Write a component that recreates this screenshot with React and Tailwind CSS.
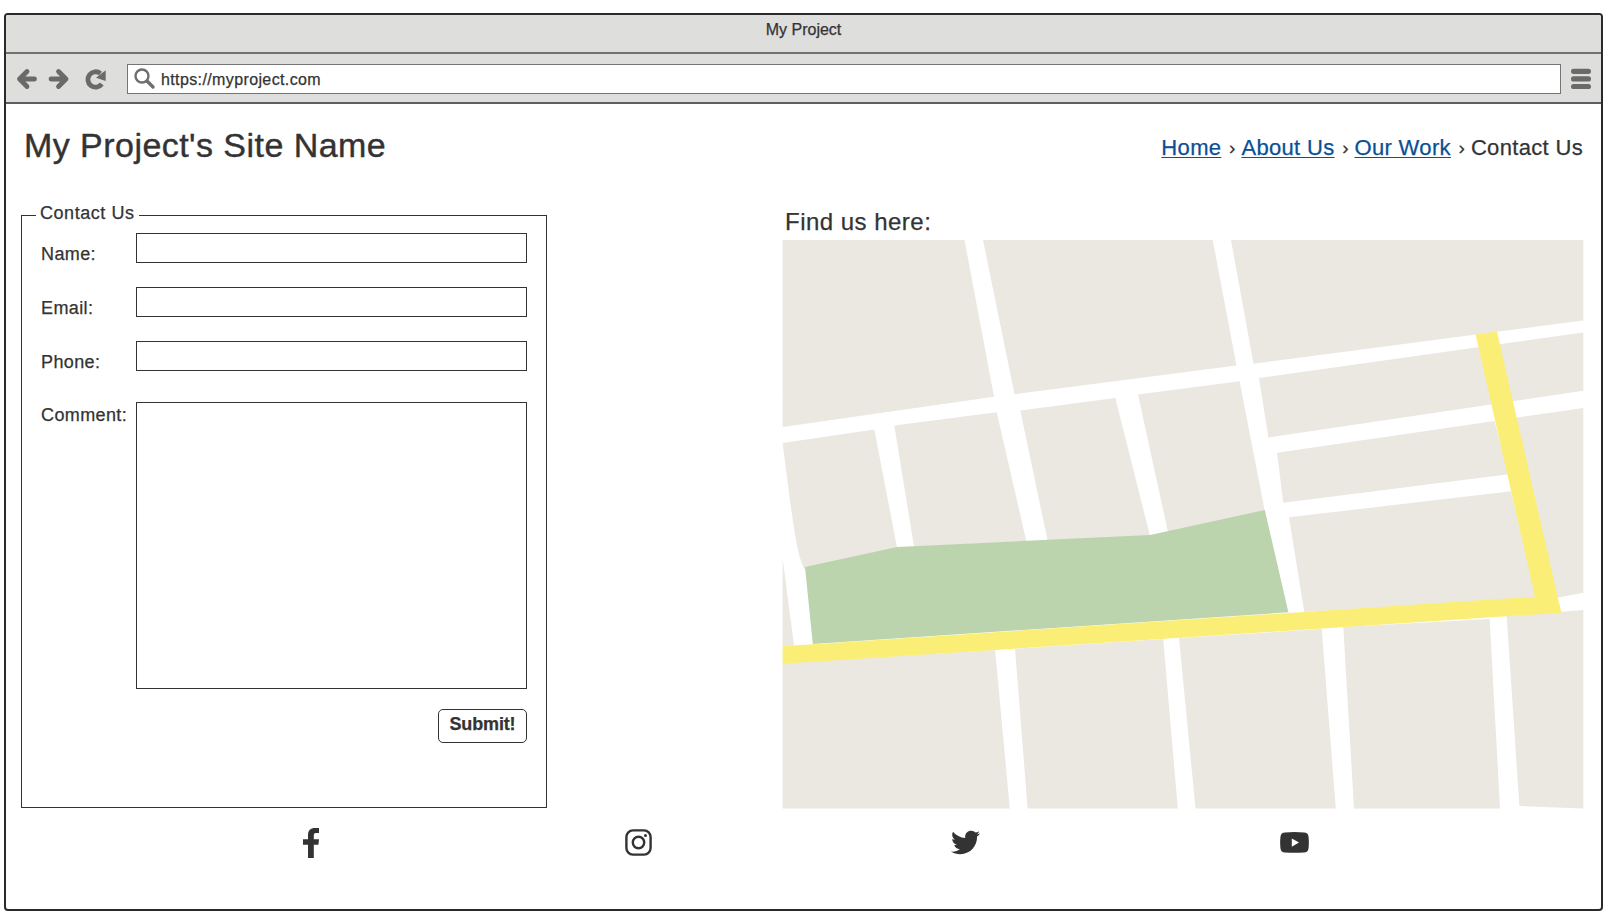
import { FaTwitter, FaYoutube } from "react-icons/fa";

const blocks = [
  "782.6,240 964.5,240 994,396.7 782.6,427",
  "983,240 1212.7,240 1236.5,365.5 1014.5,394.3",
  "1231,240 1583.3,240 1583.3,320.5 1253.5,363.7",
  "894.3,425.5 996.7,412.3 1026.3,541 914,546.5",
  "1020.3,410.5 1115.3,398 1150,536 1047.7,541",
  "1138,394.5 1239.6,381.3 1264.7,510.5 1168,532",
  "1259,378 1583.3,332.5 1583.3,390.7 1268.4,437.5",
  "1277,452.7 1494.5,421 1508.5,474.3 1283.3,502.8",
  "1512,418.2 1583.3,408 1583.3,592.7 1552,598.7",
  "1289,517.3 1511,491.3 1536,597.5 1304.3,612",
  "782.6,558.3 794,645.5 782.6,646.5",
  "782.6,663 995.1,650 1009.8,808.4 782.6,808.4",
  "1015,648.8 1163.2,639 1177.8,808.4 1027.6,808.4",
  "1179,638 1321.7,629 1335.8,808.4 1195.5,808.4",
  "1343.3,627 1489.7,619 1500,808.4 1354,808.4",
  "1506.7,616 1583.3,610 1583.3,808.4 1519.4,806",
];

function StreetMap() {
  return (
    <svg className="block h-[569px] w-[802px]" viewBox="782 240 802 569">
      <g fill="#ebe8e1">
        {blocks.map((p) => (
          <polygon key={p} points={p} />
        ))}
        <path d="M782.6 443 L874.3 429.4 L897 547.5 L804.5 569 C797 556 793 522 787.3 480 Z" />
      </g>
      <polygon fill="#bcd4ad" points="805,567 897,547 1150,535 1264.8,510 1288.4,612.3 812.8,644" />
      <polygon fill="#faee77" points="782.6,646.2 1535,596.7 1475.6,334.4 1497,331.6 1561.4,612.8 782.6,663.8" />
    </svg>
  );
}

function Field({ label, className, labelClass = "mt-[10px]", children }) {
  return (
    <label className={"flex items-start " + className}>
      <span className={"h-[20px] w-[95px] shrink-0 leading-[22px] tracking-[0.38px] " + labelClass}>{label}</span>
      {children}
    </label>
  );
}

const input = "block w-[391px] shrink-0 rounded-none border border-[#333] bg-white";
const link = "shrink-0 whitespace-nowrap text-[#0b4f94] underline underline-offset-[2px] decoration-1";
const sep = "w-[20px] shrink-0 pl-[2px] text-center text-[19px]";

export default function App() {
  return (
    <div className="h-[915px] w-[1606px] overflow-hidden bg-white pt-[13px] pl-[4px] font-['Liberation_Sans',Arial,sans-serif] text-[#333] [-webkit-text-stroke:0.25px]">
      <div className="flex h-[898px] w-[1599px] flex-col overflow-hidden rounded-[4px] border-2 border-[#2b292b] bg-white">
        <div className="h-[39px] shrink-0 border-b-2 border-[#717170] bg-[#dededc] text-center text-[16px] leading-[29px]">My Project</div>
        <div className="flex h-[50px] shrink-0 items-center border-b-2 border-[#5f5d5f] bg-[#dededc] pt-[2px]">
          <svg className="ml-[10px] h-[30px] w-[100px]" viewBox="0 0 100 30" fill="none" stroke="#6a6a6a" strokeWidth="4.8" strokeLinecap="round" strokeLinejoin="round">
            <path d="M11 7.500 3.500 15l7.500 7.500M4 15h14.500" />
            <path d="M42.500 7.500 50 15l-7.500 7.500M49.500 15H35" />
            <path d="M85.800 20A7.700 7.700 0 1 1 84.500 9.500" strokeLinecap="butt" />
            <path d="M89.700 6.200V17L80 13.700Z" fill="#6a6a6a" stroke="none" />
          </svg>
          <div className="ml-[11px] flex h-[30px] w-[1434px] items-center border border-[#757575] bg-white">
            <svg className="ml-[6px] h-[22px] w-[22px]" viewBox="0 0 22 22" fill="none" stroke="#6f6f6f">
              <circle cx="8" cy="8" r="6.500" strokeWidth="2.400" />
              <path d="m13 13 6 6" strokeWidth="3.400" strokeLinecap="round" />
            </svg>
            <span className="ml-[5px] pt-px text-[16px] tracking-[0.38px]">https://myproject.com</span>
          </div>
          <svg className="ml-[10px] h-[22px] w-[20px]" viewBox="0 0 20 22" fill="#6a6a6a">
            <rect y="0.700" width="20" height="5.200" rx="2.600" />
            <rect y="8.300" width="20" height="5.200" rx="2.600" />
            <rect y="15.900" width="20" height="5.200" rx="2.600" />
          </svg>
        </div>

        <header className="flex h-[103px] shrink-0 justify-between pr-[18px] pl-[18px]">
          <h1 className="mt-[19px] text-[34px] leading-[44px] tracking-[0.45px] [-webkit-text-stroke:0.4px]">My Project's Site Name</h1>
          <nav className="mt-[29px] flex h-[30px] text-[22px] leading-[30px] tracking-[0.33px]">
            <a className={link}>Home</a>
            <span className={sep}>›</span>
            <a className={link}>About Us</a>
            <span className={sep}>›</span>
            <a className={link}>Our Work</a>
            <span className={sep}>›</span>
            <span>Contact Us</span>
          </nav>
        </header>

        <main className="flex h-[601px] shrink-0 justify-between pr-[17px] pl-[15px]">
          <fieldset className="h-[601px] w-[526px] border border-[#333] pl-[19px] text-[18px]">
            <legend className="-ml-[5px] h-[16px] px-[4px] leading-[13px] tracking-[0.55px]">Contact Us</legend>
            <Field label="Name:" className="mt-[10px]">
              <input className={input + " h-[30px]"} />
            </Field>
            <Field label="Email:" className="mt-[24px]">
              <input className={input + " h-[30px]"} />
            </Field>
            <Field label="Phone:" className="mt-[24px]">
              <input className={input + " h-[30px]"} />
            </Field>
            <Field label="Comment:" className="mt-[31px]" labelClass="mt-[2px]">
              <textarea className={input + " h-[287px] resize-none"} />
            </Field>
            <div className="flex pt-[20px] pl-[397px]">
              <button className="h-[34px] w-[89px] rounded-[5px] border border-[#333] bg-white pb-[3px] text-[18px] font-bold tracking-[-0.15px]">Submit!</button>
            </div>
          </fieldset>
          <section className="w-[802px]">
            <h2 className="h-[33px] pl-[3px] text-[24px] leading-[30px] tracking-[0.48px]">Find us here:</h2>
            <StreetMap />
          </section>
        </main>

        <footer className="flex h-[69px] shrink-0 items-center pl-[297px]">
          <svg className="h-[30px] w-[16px]" viewBox="0 0 16 30" fill="#333">
            <path d="M5 30V16.800H0V11.200H5V7C5 2.300 7.600 0 12 0H16V5H13C11.300 5 10.800 6 10.800 7.500V11.200H16L15.400 16.800H10.800V30Z" />
          </svg>
          <svg className="ml-[306px] h-[27px] w-[27px]" viewBox="0 0 27 27" fill="none" stroke="#333" strokeWidth="2.400">
            <rect x="1.400" y="1.400" width="24.200" height="24.200" rx="6.500" />
            <circle cx="13.500" cy="13.500" r="5.700" />
            <circle cx="20.500" cy="6.500" r="1.500" fill="#333" stroke="none" />
          </svg>
          <FaTwitter className="ml-[299px] h-[29px] w-[29px]" />
          <svg className="ml-[300px] h-[21px] w-[29px]" viewBox="0 0 29 21" fill="#333">
            <path fillRule="evenodd" d="M5 .5Q14.500-.3 24 .5 28 .6 28.500 4.500 29.200 10.500 28.500 16.500 28 20.300 24 20.500 14.500 21.200 5 20.500 1 20.300.5 16.500-.2 10.500.5 4.500 1 .6 5 .5ZM11.800 6.500V14.700L19 10.600Z" />
          </svg>
        </footer>
      </div>
    </div>
  );
}
